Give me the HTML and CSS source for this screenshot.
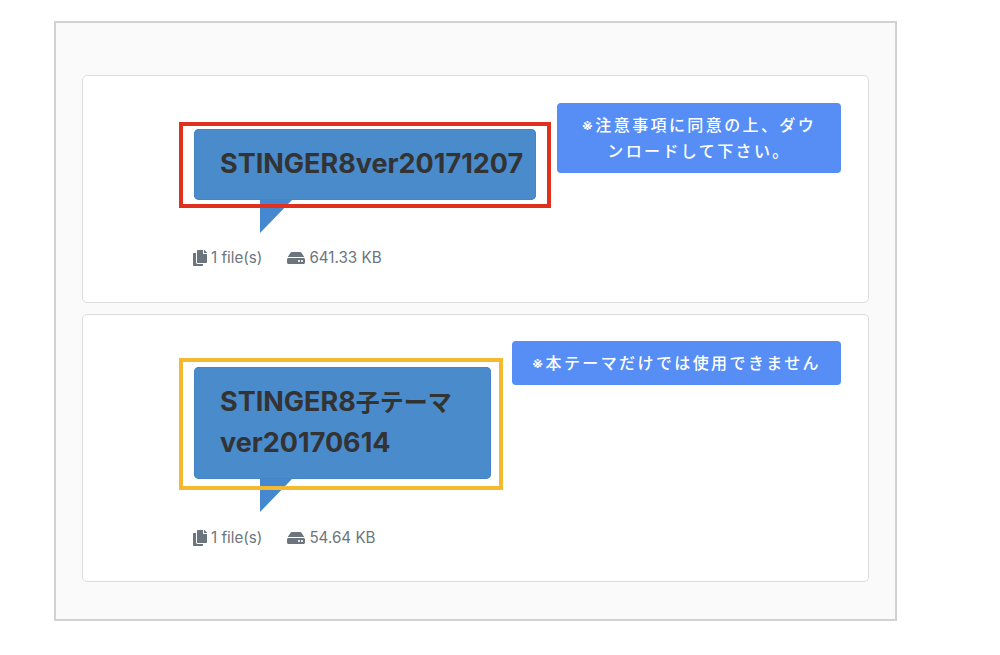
FILE: index.html
```html
<!DOCTYPE html>
<html lang="ja">
<head>
    <meta charset="UTF-8">
    <meta name="viewport" content="width=device-width, initial-scale=1.0">
    <title>ダウンロード</title>
    <link rel="stylesheet" href="styles.css">
</head>
<body>

<div class="container">
    <div class="card">
        <div class="file-info">
            <div class="bubble">
                <h2 class="bubble-title">STINGER8ver20171207</h2>
                <span class="highlight highlight-red"></span>
            </div>
            <div class="meta">
                <span class="meta-item">
                    <svg class="icon icon-copy" viewBox="0 0 448 512"><path d="M320 448v40c0 13.255-10.745 24-24 24H24c-13.255 0-24-10.745-24-24V120c0-13.255 10.745-24 24-24h72v296c0 30.879 25.121 56 56 56h168zm0-344V0H152c-13.255 0-24 10.745-24 24v368c0 13.255 10.745 24 24 24h272c13.255 0 24-10.745 24-24V128H344c-13.2 0-24-10.8-24-24zm120.971-31.029L375.029 7.029A24 24 0 0 0 358.059 0H352v96h96v-6.059a24 24 0 0 0-7.029-16.97z"/></svg>
                    1 file(s)
                </span>
                <span class="meta-item">
                    <svg class="icon icon-hdd" viewBox="0 0 576 512"><path d="M576 304v96c0 26.51-21.49 48-48 48H48c-26.51 0-48-21.49-48-48v-96c0-26.51 21.49-48 48-48h480c26.51 0 48 21.49 48 48zm-48-80a79.557 79.557 0 0 1 30.777 6.165L462.25 85.374A48.003 48.003 0 0 0 422.311 64H153.689a48 48 0 0 0-39.938 21.374L17.223 230.165A79.557 79.557 0 0 1 48 224h480zm-48 96c-17.673 0-32 14.327-32 32s14.327 32 32 32 32-14.327 32-32-14.327-32-32-32zm-96 0c-17.673 0-32 14.327-32 32s14.327 32 32 32 32-14.327 32-32-14.327-32-32-32z"/></svg>
                    641.33 KB
                </span>
            </div>
        </div>
        <a class="notice notice-wide">※注意事項に同意の上、ダウンロードして下さい。</a>
    </div>

    <div class="card">
        <div class="file-info">
            <div class="bubble bubble-narrow">
                <h2 class="bubble-title">STINGER8<span class="title-jp">子テーマ</span> ver20170614</h2>
                <span class="highlight highlight-yellow"></span>
            </div>
            <div class="meta">
                <span class="meta-item">
                    <svg class="icon icon-copy" viewBox="0 0 448 512"><path d="M320 448v40c0 13.255-10.745 24-24 24H24c-13.255 0-24-10.745-24-24V120c0-13.255 10.745-24 24-24h72v296c0 30.879 25.121 56 56 56h168zm0-344V0H152c-13.255 0-24 10.745-24 24v368c0 13.255 10.745 24 24 24h272c13.255 0 24-10.745 24-24V128H344c-13.2 0-24-10.8-24-24zm120.971-31.029L375.029 7.029A24 24 0 0 0 358.059 0H352v96h96v-6.059a24 24 0 0 0-7.029-16.97z"/></svg>
                    1 file(s)
                </span>
                <span class="meta-item">
                    <svg class="icon icon-hdd" viewBox="0 0 576 512"><path d="M576 304v96c0 26.51-21.49 48-48 48H48c-26.51 0-48-21.49-48-48v-96c0-26.51 21.49-48 48-48h480c26.51 0 48 21.49 48 48zm-48-80a79.557 79.557 0 0 1 30.777 6.165L462.25 85.374A48.003 48.003 0 0 0 422.311 64H153.689a48 48 0 0 0-39.938 21.374L17.223 230.165A79.557 79.557 0 0 1 48 224h480zm-48 96c-17.673 0-32 14.327-32 32s14.327 32 32 32 32-14.327 32-32-14.327-32-32-32zm-96 0c-17.673 0-32 14.327-32 32s14.327 32 32 32 32-14.327 32-32-14.327-32-32-32z"/></svg>
                    54.64 KB
                </span>
            </div>
        </div>
        <a class="notice">※本テーマだけでは使用できません</a>
    </div>
</div>

</body>
</html>
```

FILE: styles.css
```css
body {
    font-family: Inter, "Noto Sans CJK JP", sans-serif;
    margin: 0;
    background-color: #ffffff;
}
.container {
    display: flex;
    flex-direction: column;
    gap: 11px;
    width: 843px;
    box-sizing: border-box;
    margin: 21px 0 0 54px;
    padding: 52px 26px 37px;
    background-color: #fafafa;
    border: 2px solid #d2d2d2;
}
.card {
    display: flex;
    justify-content: space-between;
    align-items: flex-start;
    padding: 27px 27px 34px 111px;
    background-color: white;
    border: 1px solid #dcdcdc;
    border-radius: 5px;
}
.card + .card {
    padding-top: 26px;
    padding-bottom: 33px;
}
.card + .card .meta {
    margin-top: 49px;
}
.bubble {
    position: relative;
    width: 342px;
    box-sizing: border-box;
    margin-top: 26px;
    padding: 14px 13px 16px 26px;
    background-color: #4a8bcc;
    border-radius: 5px;
    box-shadow: inset 0 0 0 1px #4584c6;
}
.bubble-narrow {
    width: 297px;
}
/* tail of the bubble */
.bubble::after {
    content: "";
    position: absolute;
    top: 100%;
    left: 66px;
    border-top: 33px solid #4588cf;
    border-right: 32px solid transparent;
}
.bubble-title {
    margin: 0;
    font-size: 27px;
    font-weight: 700;
    line-height: 41px;
    color: #333333;
}
.title-jp {
    font-size: 24px;
    line-height: 1;
}
.highlight {
    position: absolute;
    top: -7px;
    left: -15px;
    right: -15px;
    bottom: -8px;
    z-index: 1;
    border: 4px solid #e0301e;
}
.highlight-yellow {
    top: -9px;
    right: -12px;
    bottom: -11px;
    border-color: #f3b92f;
}
.meta {
    display: flex;
    gap: 25px;
    margin: 48px 0 0 -1px;
    font-size: 15.2px;
    line-height: 20px;
    color: #6c757d;
}
.meta-item {
    display: flex;
    align-items: center;
    gap: 4px;
}
.icon {
    fill: #6c757d;
}
.icon-copy {
    width: 14px;
    height: 16px;
}
.icon-hdd {
    width: 18px;
    height: 16px;
}
.notice {
    padding: 9px 20px;
    background-color: #568ef5;
    border-radius: 4px;
    font-size: 16px;
    font-weight: 500;
    line-height: 26px;
    letter-spacing: 2.4px;
    color: white;
    text-align: center;
}
.notice-wide {
    width: 284px;
    box-sizing: border-box;
}
```
